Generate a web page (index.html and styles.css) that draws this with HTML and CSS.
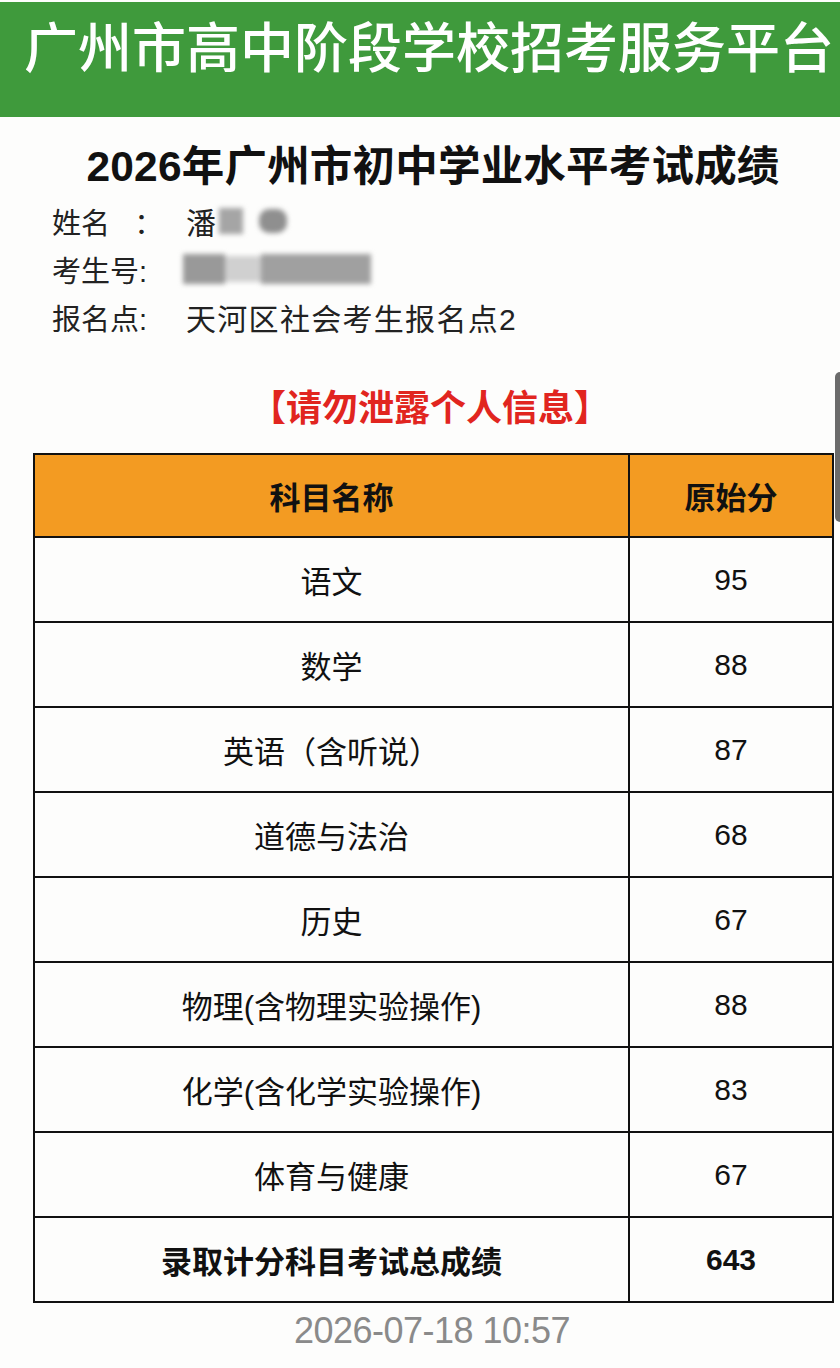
FILE: index.html
```html
<!DOCTYPE html>
<html lang="zh-CN">
<head>
<meta charset="utf-8">
<title>广州市高中阶段学校招考服务平台</title>
<link rel="stylesheet" href="styles.css">
</head>
<body>
<header class="topbar">
  <div class="topbar-title">广州市高中阶段学校招考服务平台</div>
</header>
<main class="page">
  <h1 class="title">2026年广州市初中学业水平考试成绩</h1>
  <div class="info">
    <div class="info-row"><span class="info-label">姓名&nbsp;&nbsp;&nbsp;：</span><span class="info-value">潘<span class="blur blur-name"><i class="b1"></i><i class="b2"></i></span></span></div>
    <div class="info-row"><span class="info-label">考生号:</span><span class="info-value"><span class="blur blur-id"><i class="c1"></i><i class="c2"></i><i class="c3"></i></span></span></div>
    <div class="info-row"><span class="info-label">报名点:</span><span class="info-value">天河区社会考生报名点2</span></div>
  </div>
  <p class="warning">【请勿泄露个人信息】</p>
  <table class="scores">
    <thead>
      <tr><th class="col-name">科目名称</th><th class="col-score">原始分</th></tr>
    </thead>
    <tbody>
      <tr><td>语文</td><td>95</td></tr>
      <tr><td>数学</td><td>88</td></tr>
      <tr><td>英语（含听说）</td><td>87</td></tr>
      <tr><td>道德与法治</td><td>68</td></tr>
      <tr><td>历史</td><td>67</td></tr>
      <tr><td>物理(含物理实验操作)</td><td>88</td></tr>
      <tr><td>化学(含化学实验操作)</td><td>83</td></tr>
      <tr><td>体育与健康</td><td>67</td></tr>
      <tr class="total"><td>录取计分科目考试总成绩</td><td>643</td></tr>
    </tbody>
  </table>
  <div class="stamp">2026-07-18 10:57</div>
</main>
<div class="edge"></div>
</body>
</html>
```
FILE: styles.css
```css
html, body {
  margin: 0;
  padding: 0;
  background: #fdfdfc;
}
body {
  width: 840px;
  height: 1368px;
  overflow: hidden;
  font-family: "Liberation Sans", "Noto Sans CJK SC", sans-serif;
  color: #111;
  position: relative;
}
.topbar {
  height: 115px;
  margin-top: 2px;
  background: #3f9a3c;
  box-sizing: border-box;
  padding: 13px 0 0 24px;
}
.topbar-title {
  font-family: "Noto Sans CJK SC", sans-serif;
  font-size: 54px;
  line-height: 60px;
  color: #fff;
  font-weight: 500;
  white-space: nowrap;
}
.page {
  display: flex;
  flex-direction: column;
  align-items: center;
}
.title {
  margin: 24px 0 0 26px;
  font-size: 42.5px;
  line-height: 52px;
  font-weight: 700;
  color: #111;
  letter-spacing: 0.2px;
}
.info {
  align-self: stretch;
  padding-left: 52px;
  margin-top: 4px;
  display: flex;
  flex-direction: column;
}
.info-row {
  display: flex;
  align-items: center;
  height: 48px;
  font-size: 29px;
  color: #222;
}
.info-label {
  width: 134px;
  white-space: nowrap;
}
.info-value {
  display: flex;
  align-items: center;
  font-size: 30px;
  letter-spacing: 1.3px;
}
.blur {
  display: inline-flex;
  align-items: center;
  filter: blur(2.5px);
}
.blur i {
  display: block;
  background: #9a9a9a;
}
.blur-name .b1 { width: 24px; height: 26px; background: #a5a5a5; margin-left: 2px; }
.blur-name .b2 { width: 28px; height: 24px; background: #8f8f8f; margin-left: 16px; border-radius: 10px; }
.blur-id { margin-left: -3px; }
.blur-id .c1 { width: 42px; height: 30px; background: #999; }
.blur-id .c2 { width: 36px; height: 26px; background: #d0d0d0; }
.blur-id .c3 { width: 110px; height: 30px; background: #a0a0a0; }
.warning {
  margin: 46px 0 0 20px;
  font-size: 36px;
  line-height: 44px;
  font-weight: 700;
  color: #e1251f;
}
.scores {
  align-self: flex-start;
  margin-top: 22px;
  margin-left: 33px;
  width: 801px;
  border-collapse: collapse;
  border: 2px solid #111;
}
.scores th, .scores td {
  border: 2px solid #111;
  text-align: center;
  height: 83px;
  padding: 0;
  font-size: 31px;
  font-weight: 400;
  color: #111;
}
.scores th {
  background: #f39b22;
  font-weight: 700;
  height: 81px;
}
.scores .col-name { width: 593px; }
.scores td:last-child { font-size: 30px; }
.scores .total td { font-weight: 700; }
.stamp {
  margin-top: 6px;
  margin-left: 24px;
  font-size: 36px;
  line-height: 44px;
  color: #8a8a8a;
  letter-spacing: -0.5px;
}
.edge {
  position: absolute;
  right: 0;
  top: 372px;
  width: 5px;
  height: 150px;
  background: #6b6b6b;
  border-radius: 6px 0 0 6px;
}
```
